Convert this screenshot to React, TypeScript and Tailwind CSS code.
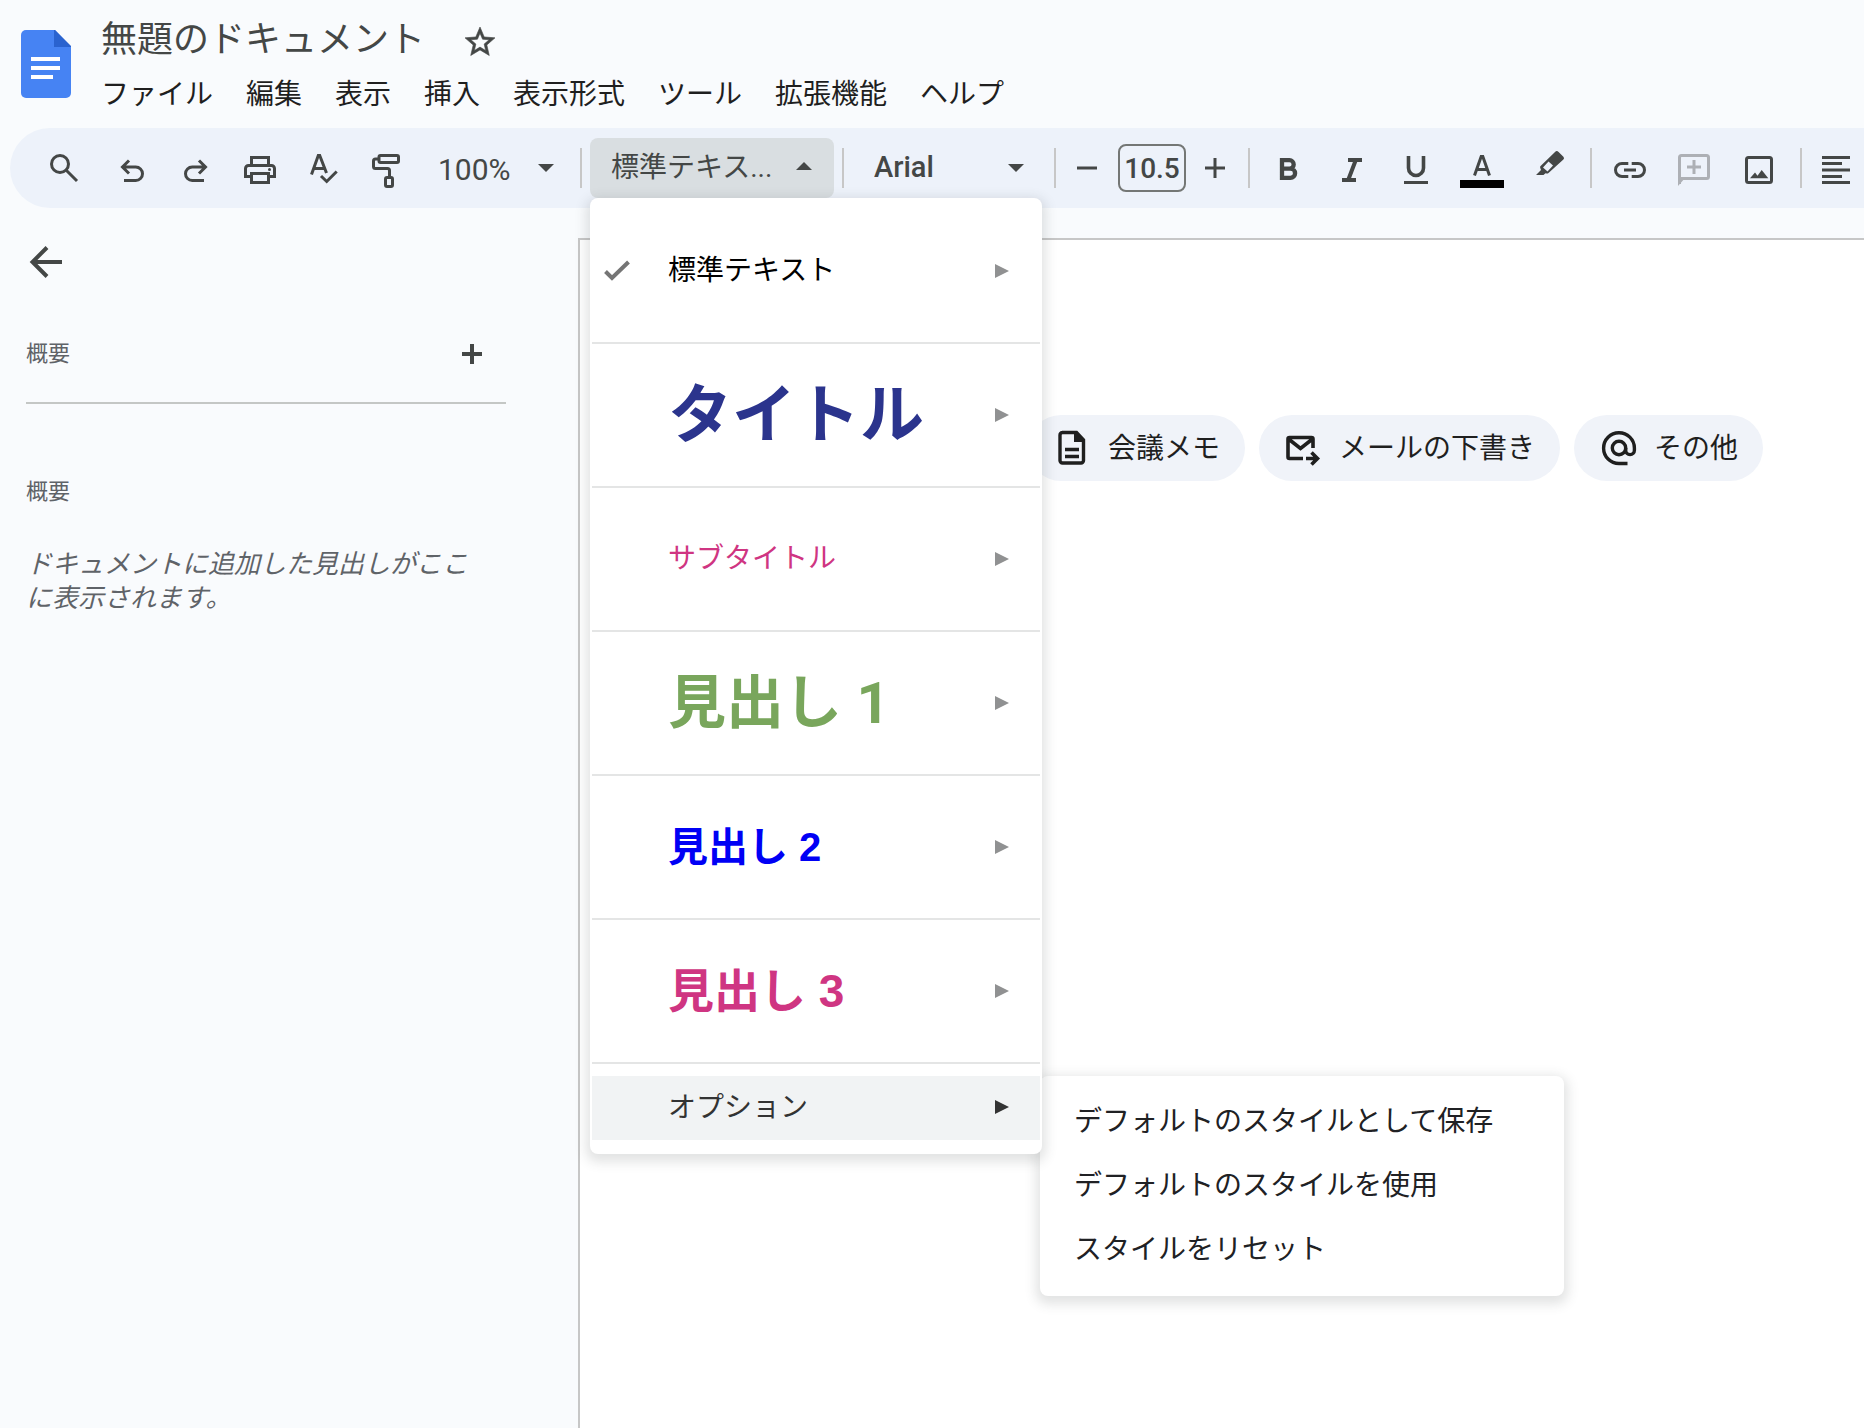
import React, { ReactNode } from "react";

const cjk = "font-['Noto_Sans_CJK_JP','Noto_Sans',sans-serif]";
const ui = "font-[Roboto,'Noto_Sans_CJK_JP',sans-serif]";
const arial = "font-['Liberation_Sans','Noto_Sans_CJK_JP',sans-serif]";

function Icon({ children, className = "" }: { children: ReactNode; className?: string }) {
  return (
    <svg
      viewBox="0 0 40 40"
      fill="none"
      stroke="currentColor"
      strokeWidth={3}
      aria-hidden="true"
      className={`size-10 shrink-0 overflow-visible ${className}`}
    >
      {children}
    </svg>
  );
}

function ToolButton({ label, width = "w-16", children }: { label: string; width?: string; children: ReactNode }) {
  return (
    <button type="button" aria-label={label} className={`flex h-15 shrink-0 items-center justify-center ${width}`}>
      {children}
    </button>
  );
}

function Separator() {
  return <div className="mx-1.5 h-10 w-0.5 shrink-0 bg-[#c7c7c7]" />;
}

function Caret({ up = false }: { up?: boolean }) {
  return (
    <svg viewBox="0 0 16 8" className="h-2 w-4 fill-[#444746]" aria-hidden="true">
      <path d={up ? "M0 8 8 0l8 8z" : "M0 0h16L8 8z"} />
    </svg>
  );
}

const menus = ["ファイル", "編集", "表示", "挿入", "表示形式", "ツール", "拡張機能", "ヘルプ"];

const styles = [
  { label: "標準テキスト", font: arial, look: "text-[28px] text-black", checked: true },
  { label: "タイトル", font: arial, look: "text-[64px] font-bold text-[#2b348d]" },
  { label: "サブタイトル", font: arial, look: "text-[28px] text-[#cf3582]" },
  { label: "見出し 1", font: ui, look: "text-[58px] font-bold text-[#79a65c]" },
  { label: "見出し 2", font: arial, look: "text-[40px] font-bold text-[#0000f5]" },
  { label: "見出し 3", font: arial, look: "text-[46px] font-bold text-[#cf3582]" },
];

const options = ["デフォルトのスタイルとして保存", "デフォルトのスタイルを使用", "スタイルをリセット"];

function SubmenuArrow({ className }: { className: string }) {
  return (
    <svg viewBox="0 0 14 14" className={`size-3.5 shrink-0 ${className}`} aria-hidden="true">
      <path d="M0 0 14 7 0 14z" />
    </svg>
  );
}

function StyleMenu() {
  return (
    <div className="absolute top-full left-0 z-20 w-[452px]">
      <div
        role="menu"
        aria-label="スタイル"
        className="relative z-10 rounded-lg bg-white px-0.5 pt-0.5 pb-3.5 shadow-[0_4px_12px_4px_rgba(60,64,67,0.15)]"
      >
        {styles.map((s) => (
          <button
            key={s.label}
            type="button"
            role="menuitemradio"
            aria-checked={!!s.checked}
            className="flex h-36 w-full items-center border-b-2 border-[#e4e5e5] pr-[31px] text-left"
          >
            <span className="flex w-19 shrink-0 pl-3">
              {s.checked && (
                <svg viewBox="0 0 26 22" className="h-[22px] w-[26px]" fill="none" stroke="#757575" strokeWidth={4} aria-hidden="true">
                  <path d="M1.5 11.5 8 18 24.5 2" />
                </svg>
              )}
            </span>
            <span className={`flex-1 leading-none whitespace-nowrap ${s.font} ${s.look}`}>{s.label}</span>
            <SubmenuArrow className="fill-[#909192]" />
          </button>
        ))}
        <button
          type="button"
          role="menuitem"
          aria-expanded="true"
          className="mt-3 flex h-16 w-full items-center bg-[#f1f3f4] pr-[31px] pb-0.5 pl-19 text-left text-[28px] leading-none text-[#333]"
        >
          <span className="flex-1 pb-1">オプション</span>
          <SubmenuArrow className="fill-[#333]" />
        </button>
      </div>
      <div
        role="menu"
        aria-label="オプション"
        className="absolute -bottom-[142px] left-[450px] w-[524px] rounded-lg bg-white pt-[11px] pb-[17px] shadow-[0_4px_12px_4px_rgba(60,64,67,0.15)]"
      >
        {options.map((o) => (
          <button key={o} type="button" role="menuitem" className="flex h-16 w-full items-center px-[34px] text-left text-[28px] leading-none text-[#202124]">
            {o}
          </button>
        ))}
      </div>
    </div>
  );
}

function Header() {
  return (
    <header className="flex h-32 items-start pl-[21px]">
      <svg viewBox="0 0 50 68" className="mt-[30px] h-[68px] w-[50px] shrink-0" role="img" aria-label="ドキュメント">
        <path d="M5 0h29l16 17v46a5 5 0 0 1-5 5H5a5 5 0 0 1-5-5V5a5 5 0 0 1 5-5z" fill="#4683f3" />
        <path d="M33 0h1l16 16v1H33z" fill="#2a63cf" />
        <path d="M10 27h29v4H10zM10 36h29v4H10zM10 45h22v4H10z" fill="#fff" />
      </svg>
      <div className="pl-[30px]">
        <div className="flex h-[76px] items-center">
          <h1 className="pb-1 text-[36px] leading-none whitespace-nowrap text-[#444746]">無題のドキュメント</h1>
          <button type="button" aria-label="スターを付ける" className="ml-[37px] pt-2 text-[#444746]">
            <svg viewBox="0 0 24 24" className="size-9" fill="currentColor" stroke="currentColor" strokeWidth={0.4} aria-hidden="true">
              <path d="M22 9.240l-7.190-.620L12 2 9.190 8.630 2 9.240l5.460 4.730L5.820 21 12 17.270 18.180 21l-1.630-7.030zM12 15.400l-3.760 2.270 1-4.280-3.320-2.880 4.380-.380L12 6.100l1.710 4.040 4.380.380-3.320 2.880 1 4.280z" />
            </svg>
          </button>
        </div>
        <nav className="flex gap-[33px]">
          {menus.map((m) => (
            <button key={m} type="button" className="text-[28px] leading-8 whitespace-nowrap text-[#1f1f1f]">
              {m}
            </button>
          ))}
        </nav>
      </div>
    </header>
  );
}

function Toolbar() {
  return (
    <div role="toolbar" aria-label="ツールバー" className={`relative z-10 ml-2.5 flex h-20 items-center rounded-l-full bg-[#edf2fa] pl-[18px] text-[#444746] ${ui}`}>
      <ToolButton label="検索" width="w-[72px]">
        <Icon>
          <circle cx="16" cy="16" r="8.5" />
          <path d="m22 22 11 11" />
        </Icon>
      </ToolButton>
      <ToolButton label="元に戻す">
        <Icon>
          <path d="M10 19h13.75a6.75 6.75 0 0 1 0 13.5H12M17 12.5 10.5 19l6.5 6.5" />
        </Icon>
      </ToolButton>
      <ToolButton label="やり直す">
        <Icon>
          <path d="M30 19H16.25a6.75 6.75 0 0 0 0 13.5H28M23 12.5l6.5 6.5-6.5 6.5" />
        </Icon>
      </ToolButton>
      <ToolButton label="印刷">
        <Icon>
          <path d="M11.5 17V9.5h17V17M11.5 28.5h-6v-8a3 3 0 0 1 3-3h23a3 3 0 0 1 3 3v8h-6M11.5 25.5h17v9h-17z" />
          <circle cx="29.5" cy="21.5" r="1.5" fill="currentColor" stroke="none" />
        </Icon>
      </ToolButton>
      <ToolButton label="スペルチェック">
        <Icon>
          <path d="M7.5 26.5 14.3 7.5h1.4L22.5 25M10 20.5h10M17 28l5.7 5.5 10-10" />
        </Icon>
      </ToolButton>
      <ToolButton label="書式を貼り付け" width="w-[60px]">
        <Icon>
          <rect x="13" y="7.5" width="19.5" height="7" rx="1.5" />
          <path d="M12.5 11h-3a2 2 0 0 0-2 2v5.5a2 2 0 0 0 2 2h12a2 2 0 0 1 2 2V29" />
          <rect x="19.5" y="29.5" width="7" height="9" rx="1.5" />
        </Icon>
      </ToolButton>
      <div className="relative ml-1 w-[154px] shrink-0">
        <select aria-label="ズーム" className="h-15 w-full appearance-none pt-0.5 pl-[18px] text-[30px] outline-none">
          <option>100%</option>
        </select>
        <span className="pointer-events-none absolute top-[26px] right-5">
          <Caret />
        </span>
      </div>
      <Separator />
      <div className={`relative ml-0.5 shrink-0 ${cjk}`}>
        <button type="button" aria-haspopup="menu" aria-expanded="true" className="flex h-15 w-[244px] items-center rounded-lg bg-[#d9dee1] pr-[22px] pb-1 pl-[21px] text-[28px] leading-none">
          <span className="flex-1 text-left whitespace-nowrap">
            標準テキス<span className="font-[Roboto]">...</span>
          </span>
          <Caret up />
        </button>
        <StyleMenu />
      </div>
      <div className="w-0.5 shrink-0" />
      <Separator />
      <div className="relative ml-0.5 w-[194px] shrink-0">
        <select aria-label="フォント" className="h-15 w-full appearance-none pl-[22px] text-[29px] font-medium outline-none">
          <option>Arial</option>
        </select>
        <span className="pointer-events-none absolute top-[26px] right-[22px]">
          <Caret />
        </span>
      </div>
      <div className="w-0.5 shrink-0" />
      <Separator />
      <ToolButton label="フォントサイズを縮小" width="w-12">
        <Icon>
          <path d="M11 20h20" />
        </Icon>
      </ToolButton>
      <input
        aria-label="フォントサイズ"
        defaultValue="10.5"
        className="ml-2 h-12 w-[68px] shrink-0 rounded-lg border-2 border-[#747775] bg-transparent text-center text-[28px] font-medium outline-none"
      />
      <ToolButton label="フォントサイズを拡大" width="w-14">
        <Icon>
          <path d="M11 20h20M21 10v20" />
        </Icon>
      </ToolButton>
      <Separator />
      <ToolButton label="太字">
        <Icon>
          <path d="M14 12.2h7.5a4.2 4.2 0 0 1 0 8.4H14zM14 20.6h8.5a4.6 4.6 0 0 1 0 9.2H14z" strokeWidth={4.3} />
        </Icon>
      </ToolButton>
      <ToolButton label="斜体">
        <Icon>
          <path d="M16 12h14M10 32h14M23.8 12 16.2 32" strokeWidth={4} />
        </Icon>
      </ToolButton>
      <ToolButton label="下線">
        <Icon>
          <path d="M12.5 8v12a7.5 7.5 0 0 0 15 0V8" strokeWidth={3.6} />
          <path d="M8 34.5h24" />
        </Icon>
      </ToolButton>
      <ToolButton label="テキストの色" width="w-[68px]">
        <Icon>
          <path d="M12.5 27.5 19.2 8.5h1.6l6.7 19M15 21.5h10" />
          <path d="M-2 36h44" stroke="#000" strokeWidth={8} />
        </Icon>
      </ToolButton>
      <ToolButton label="ハイライトの色" width="w-[68px]">
        <Icon>
          <path
            fill="currentColor"
            stroke="none"
            fillRule="evenodd"
            d="M6 27l5-5-.8-2.200q-.4-1 .4-1.800L25 4q1.800-1.800 3.600 0l4.800 4.800q1.400 1.400 0 2.800L18.500 25q-1 .9-2 .5l-1-.3L13.500 27zM13 19.500l4.500 4 5.500-6-4.500-4z"
          />
        </Icon>
      </ToolButton>
      <Separator />
      <ToolButton label="リンクを挿入">
        <Icon>
          <path d="M18.3 15.5H12a6.5 6.5 0 0 0 0 13h6.3M21.7 15.5H28a6.5 6.5 0 0 1 0 13h-6.3M14 22h12" />
        </Icon>
      </ToolButton>
      <ToolButton label="コメントを追加">
        <Icon className="text-[#adb0b5]">
          <path d="M5.5 36V9.5a2 2 0 0 1 2-2h25a2 2 0 0 1 2 2v19a2 2 0 0 1-2 2H8M13 19h14M20 12v14" />
          <path d="M4 38v-9h8z" fill="currentColor" stroke="none" />
        </Icon>
      </ToolButton>
      <ToolButton label="画像を挿入" width="w-[68px]">
        <Icon>
          <rect x="6.5" y="9.5" width="25" height="25" rx="2" />
          <path d="m10 30.3 5-5.8 2.5 3.2L21.7 22l6.6 8.3z" fill="currentColor" stroke="none" />
        </Icon>
      </ToolButton>
      <Separator />
      <ToolButton label="左揃え" width="w-14">
        <Icon>
          <path d="M6 9.5h28M6 15.5h20M6 22h28M6 28.5h20M6 34.5h28" />
        </Icon>
      </ToolButton>
    </div>
  );
}

function Sidebar() {
  return (
    <aside className="w-[578px] shrink-0 pl-[26px]">
      <button type="button" aria-label="戻る" className="mt-1 flex text-[#444746]">
        <Icon>
          <path d="M6 20h30M21 5.5 6.5 20 21 34.5" strokeWidth={4} />
        </Icon>
      </button>
      <div className="mr-[72px] mt-[34px] flex h-[88px] items-center justify-between border-b-2 border-[#c4c7c5] pr-3.5 pb-2.5">
        <h2 className="pb-1.5 text-[22px] leading-none text-[#5f6368]">概要</h2>
        <button type="button" aria-label="概要を追加" className="text-[#444746]">
          <Icon>
            <path d="M10 20h20M20 10v20" strokeWidth={4} />
          </Icon>
        </button>
      </div>
      <h2 className="mt-[71px] text-[22px] leading-7 text-[#5f6368]">概要</h2>
      <p className="mt-[42px] mr-[92px] text-[26px] leading-[34px] text-[#5f6368] italic">
        ドキュメントに追加した見出しがここに表示されます。
      </p>
    </aside>
  );
}

function Chip({ label, children }: { label: string; children: ReactNode }) {
  return (
    <button type="button" className="flex h-[66px] shrink-0 items-center gap-4 rounded-full bg-[#f0f3f9] pr-[25px] pl-6 text-[28px] leading-none whitespace-nowrap text-[#1f1f1f]">
      {children}
      <span className="pb-1">{label}</span>
    </button>
  );
}

function Page() {
  return (
    <main className="flex-1 border-t-2 border-l-2 border-[#c7c7c7] bg-white">
      <div className="mt-[175px] ml-[448px] flex gap-3.5">
        <Chip label="会議メモ">
          <Icon>
            <path
              d="M10 4.500h14.500l7 7.500v20.500a2.500 2.500 0 0 1-2.500 2.500H10.500A2.500 2.500 0 0 1 8 32.500V7a2.500 2.500 0 0 1 2.500-2.500M13 21.500h14M13 28.500h14"
              strokeWidth={3.4}
            />
            <path d="M22 3.5V14h11z" fill="currentColor" stroke="none" />
          </Icon>
        </Chip>
        <Chip label="メールの下書き">
          <Icon>
            <path
              d="M20 30.500H6.500a1.500 1.500 0 0 1-1.500-1.500V11a1.500 1.500 0 0 1 1.500-1.500h22A1.500 1.500 0 0 1 30 11v9M5.500 11 17.500 20.500 29.500 11M23 30.500h11M28.500 24.500l6 6-6 6"
              strokeWidth={3.6}
            />
          </Icon>
        </Chip>
        <Chip label="その他">
          <Icon>
            <g strokeWidth={3.4}>
              <circle cx="21" cy="20" r="6.7" />
              <path d="M29.5 35.5H21A15.4 15.4 0 1 1 36.4 20v2.3a4.35 4.35 0 0 1-8.700 0V20" />
            </g>
          </Icon>
        </Chip>
      </div>
    </main>
  );
}

export default function App() {
  return (
    <div lang="ja" className={`flex min-h-screen flex-col overflow-x-clip bg-[#f9fbfd] ${cjk}`}>
      <Header />
      <Toolbar />
      <div className="mt-[30px] flex flex-1">
        <Sidebar />
        <Page />
      </div>
    </div>
  );
}
